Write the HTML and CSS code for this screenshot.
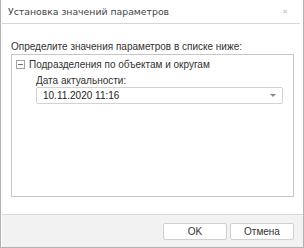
FILE: index.html
```html
<!DOCTYPE html>
<html lang="ru">
<head>
    <meta charset="UTF-8">
    <title>Установка значений параметров</title>
<link rel="stylesheet" href="styles.css">
</head>
<body>
    <div class="dialog">
        <div class="dialog-head">
            <span class="dialog-title">Установка значений параметров</span>
            <span class="dialog-close">&#x2715;</span>
        </div>
        <div class="dialog-body">
            <div class="hint">Определите значения параметров в списке ниже:</div>
            <div class="params">
                <div class="group">
                    <span class="toggle"></span>
                    <span class="group-name">Подразделения по объектам и округам</span>
                </div>
                <div class="field">
                    <div class="field-label">Дата актуальности:</div>
                    <div class="combo">
                        <span class="combo-value">10.11.2020 11:16</span>
                        <span class="combo-arrow"></span>
                    </div>
                </div>
            </div>
        </div>
        <div class="dialog-foot">
            <button class="btn">OK</button>
            <button class="btn">Отмена</button>
        </div>
    </div>
</body>
</html>
```

FILE: styles.css
```css
body{
    margin: 0;
    background: #fff;
}
.dialog{
    width: 304px;
    height: 248px;
    box-sizing: border-box;
    border: 1px solid #b2b2b2;
    border-top: none;
    display: flex;
    flex-direction: column;
    font-family: "Liberation Sans", Arial, sans-serif;
    font-size: 10px;
    color: #333;
}
.dialog-head{
    height: 23px;
    margin: 0 3px 0 1px;
    border-bottom: 1px solid #d6d6d6;
    display: flex;
    align-items: center;
    justify-content: space-between;
    padding: 0 12px 0 6px;
}
.dialog-title{
    font-family: "DejaVu Sans", sans-serif;
    font-size: 9.3px;
    color: #444;
}
.dialog-close{
    font-family: "DejaVu Sans", sans-serif;
    font-size: 7px;
    color: #bdbdbd;
}
.dialog-body{
    flex: 1;
    padding: 15px 9px 0 10px;
}
.hint{
    line-height: 15px;
}
.params{
    height: 143px;
    box-sizing: border-box;
    border: 1px solid #c6c6c6;
    padding: 3px 10px 0 4px;
}
.group{
    display: flex;
    align-items: center;
    line-height: 13px;
}
.toggle{
    width: 9px;
    height: 9px;
    box-sizing: border-box;
    border: 1px solid #a0a0a0;
    position: relative;
    margin-right: 4px;
}
.toggle::after{
    content: "";
    position: absolute;
    left: 1px;
    right: 1px;
    top: 3px;
    height: 1px;
    background: #707070;
}
.field{
    padding: 3px 0 0 20px;
}
.field-label{
    line-height: 13px;
}
.combo{
    height: 17px;
    box-sizing: border-box;
    border: 1px solid #d2d2d2;
    border-radius: 2px;
    display: flex;
    align-items: center;
    justify-content: space-between;
    padding: 0 6px 0 6px;
    color: #222;
}
.combo-arrow{
    width: 0;
    height: 0;
    border-left: 3px solid transparent;
    border-right: 3px solid transparent;
    border-top: 3px solid #8a8a8a;
}
.dialog-foot{
    height: 33px;
    box-sizing: border-box;
    margin: 0 0 0 1px;
    background: #f2f2f2;
    border-top: 1px solid #d8d8d8;
    display: flex;
    justify-content: flex-end;
    gap: 3px;
    padding: 8px 9px 0 0;
}
.btn{
    width: 64px;
    height: 17px;
    box-sizing: border-box;
    background: #fff;
    border: 1px solid #d0d0d0;
    border-radius: 2px;
    font-family: "Liberation Sans", Arial, sans-serif;
    font-size: 10px;
    color: #333;
    padding: 0;
}
```
